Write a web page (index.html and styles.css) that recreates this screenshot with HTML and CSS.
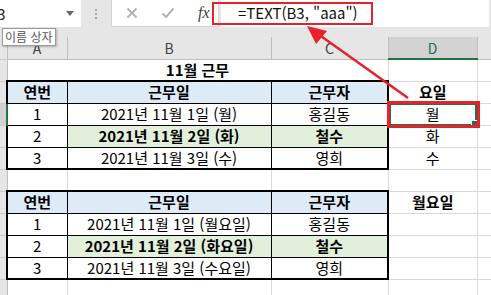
FILE: index.html
```html
<!DOCTYPE html>
<html lang="ko">
<head>
    <meta charset="UTF-8">
    <title>TEXT 함수 요일</title>
    <link rel="stylesheet" href="styles.css">
</head>
<body>
    <div class="excel">
        <div class="toolbar">
            <div class="namebox">
                <span class="nb-text">D3</span>
                <span class="nb-arrow"></span>
            </div>
            <div class="grip"><i></i><i></i><i></i></div>
            <div class="fbtns">
                <svg class="btn-x" width="12" height="12" viewBox="0 0 12 12"><path d="M1.5 1.5 L10.5 10.5 M10.5 1.5 L1.5 10.5" /></svg>
                <svg class="btn-ok" width="14" height="12" viewBox="0 0 14 12"><path d="M1.5 6.5 L5 10 L12.5 1.5" /></svg>
                <span class="fx">fx</span>
            </div>
            <div class="formula">=TEXT(B3, "aaa")</div>
            <div class="formula-mark"></div>
        </div>

        <div class="tooltip">이름 상자</div>

        <table class="sheet">
            <colgroup>
                <col class="c-rh"><col class="c-a"><col class="c-b"><col class="c-c"><col class="c-d"><col class="c-e">
            </colgroup>
            <tr class="colhead">
                <th class="rh"></th><th>A</th><th>B</th><th>C</th><th class="sel">D</th><th></th>
            </tr>
            <tr>
                <th class="rh"></th>
                <td colspan="3" class="bold">11월 근무</td><td></td><td></td>
            </tr>
            <tr>
                <th class="rh"></th>
                <td class="in hd t l">연번</td><td class="in hd t">근무일</td><td class="in hd t r">근무자</td>
                <td class="bold">요일</td><td></td>
            </tr>
            <tr>
                <th class="rh selrow"></th>
                <td class="in l">1</td><td class="in">2021년 11월 1일 (월)</td><td class="in r">홍길동</td>
                <td class="active">월<span class="sel-box"></span><span class="mark"></span></td><td></td>
            </tr>
            <tr>
                <th class="rh"></th>
                <td class="in l">2</td><td class="in hl">2021년 11월 2일 (화)</td><td class="in hl r">철수</td>
                <td>화</td><td></td>
            </tr>
            <tr>
                <th class="rh"></th>
                <td class="in l b">3</td><td class="in b">2021년 11월 3일 (수)</td><td class="in r b">영희</td>
                <td>수</td><td></td>
            </tr>
            <tr>
                <th class="rh"></th>
                <td></td><td></td><td></td><td></td><td></td>
            </tr>
            <tr>
                <th class="rh"></th>
                <td class="in hd t l">연번</td><td class="in hd t">근무일</td><td class="in hd t r">근무자</td>
                <td class="bold">월요일</td><td></td>
            </tr>
            <tr>
                <th class="rh"></th>
                <td class="in l">1</td><td class="in">2021년 11월 1일 (월요일)</td><td class="in r">홍길동</td>
                <td></td><td></td>
            </tr>
            <tr>
                <th class="rh"></th>
                <td class="in l">2</td><td class="in hl">2021년 11월 2일 (화요일)</td><td class="in hl r">철수</td>
                <td></td><td></td>
            </tr>
            <tr>
                <th class="rh"></th>
                <td class="in l b">3</td><td class="in b">2021년 11월 3일 (수요일)</td><td class="in r b">영희</td>
                <td></td><td></td>
            </tr>
            <tr>
                <th class="rh"></th>
                <td></td><td></td><td></td><td></td><td></td>
            </tr>
        </table>

        <svg class="arrow" width="491" height="295" viewBox="0 0 491 295">
            <line x1="408" y1="98" x2="318" y2="34" />
            <polygon points="307,26 327,31 316,44" />
        </svg>
    </div>
</body>
</html>
```

FILE: styles.css
```css
body {
    margin: 0;
    background: #e6e6e6;
    font-family: "Noto Sans CJK KR", "Noto Sans", sans-serif;
}
.excel {
    position: relative;
    width: 491px;
    height: 295px;
    overflow: hidden;
    background: #e6e6e6;
}

/* formula bar */
.toolbar {
    display: flex;
    height: 27px;
    position: relative;
}
.namebox {
    width: 81px;
    background: #fff;
    display: flex;
    align-items: center;
    justify-content: space-between;
    overflow: hidden;
}
.nb-text {
    margin-left: -13px;
    font-size: 15px;
    color: #222;
}
.nb-arrow {
    margin-right: 7px;
    border-left: 4px solid transparent;
    border-right: 4px solid transparent;
    border-top: 5px solid #666;
}
.grip {
    width: 30px;
    display: flex;
    flex-direction: column;
    align-items: center;
    justify-content: center;
    gap: 2px;
}
.grip i {
    display: block;
    width: 2px;
    height: 2px;
    background: #a6a6a6;
}
.fbtns {
    width: 108px;
    background: #fff;
    border: 1px solid #d6d6d6;
    border-top: none;
    display: flex;
    align-items: center;
    box-sizing: border-box;
}
.fbtns svg {
    fill: none;
    stroke: #b3b3b3;
    stroke-width: 2;
}
.btn-x {
    margin-left: 14px;
}
.btn-ok {
    margin-left: 23px;
}
.fx {
    margin-left: 23px;
    font-family: "Liberation Serif", serif;
    font-style: italic;
    font-size: 16px;
    color: #444;
}
.formula {
    flex: 1;
    margin-left: 2px;
    margin-right: 2px;
    background: #fff;
    padding-left: 17px;
    font-size: 15px;
    line-height: 26px;
    color: #111;
}
.formula-mark {
    position: absolute;
    left: 212px;
    top: 2px;
    width: 161px;
    height: 23px;
    border: 2px solid #e8212b;
    box-sizing: border-box;
}

.tooltip {
    position: absolute;
    left: 2px;
    top: 28px;
    padding: 0 2px;
    height: 16px;
    line-height: 15px;
    font-size: 12px;
    color: #555;
    background: #fff;
    border: 1px solid #9a9a9a;
    box-shadow: 1px 1px 2px rgba(0,0,0,0.25);
    z-index: 3;
}

/* sheet */
.sheet {
    margin-top: 10px;
    width: 491px;
    table-layout: fixed;
    border-collapse: collapse;
    background: #fff;
}
.c-rh { width: 7px; }
.c-a { width: 60px; }
.c-b { width: 204px; }
.c-c { width: 117px; }
.c-d { width: 89px; }
.c-e { width: 14px; }
.sheet tr {
    height: 22px;
}
.sheet td {
    padding: 0;
    border: 1px solid #d9d9d9;
    text-align: center;
    vertical-align: middle;
    font-size: 15px;
    line-height: 20px;
    color: #000;
    white-space: nowrap;
    overflow: hidden;
}
.sheet th {
    padding: 0;
    font-weight: normal;
    background: #e6e6e6;
}
.colhead th {
    border-right: 1px solid #bfbfbf;
    border-bottom: 1px solid #bfbfbf;
    font-size: 14px;
    line-height: 20px;
    color: #444;
}
.colhead th.sel {
    background: #d2d2d2;
    color: #217346;
    border-bottom: 2px solid #217346;
}
.sheet th.rh {
    border-right: 1px solid #bfbfbf;
    border-bottom: 1px solid #c9c9c9;
}
.sheet th.selrow {
    background: #d2d2d2;
    border-right: 2px solid #217346;
}
.bold {
    font-weight: bold;
}
.sheet td.in {
    border: 1px solid #000;
}
.sheet td.hd {
    background: #ddebf7;
    font-weight: bold;
}
.sheet td.hl {
    background: #e2efda;
    font-weight: bold;
}
.sheet td.t { border-top: 2px solid #000; }
.sheet td.b { border-bottom: 2px solid #000; }
.sheet td.l { border-left: 2px solid #000; }
.sheet td.r { border-right: 2px solid #000; }

.active {
    position: relative;
    overflow: visible !important;
}
.sel-box {
    position: absolute;
    left: 0;
    top: -1px;
    right: 0;
    bottom: -1px;
    border: 2px solid #217346;
}
.sel-box::after {
    content: "";
    position: absolute;
    right: -3px;
    bottom: -3px;
    width: 5px;
    height: 5px;
    background: #217346;
    border: 1px solid #fff;
}
.mark {
    position: absolute;
    left: -2px;
    top: -3px;
    right: -3px;
    bottom: -3px;
    border: 3px solid #e8212b;
    z-index: 2;
}

.arrow {
    position: absolute;
    left: 0;
    top: 0;
    pointer-events: none;
}
.arrow line {
    stroke: #e8212b;
    stroke-width: 2.5;
}
.arrow polygon {
    fill: #e8212b;
}
```
